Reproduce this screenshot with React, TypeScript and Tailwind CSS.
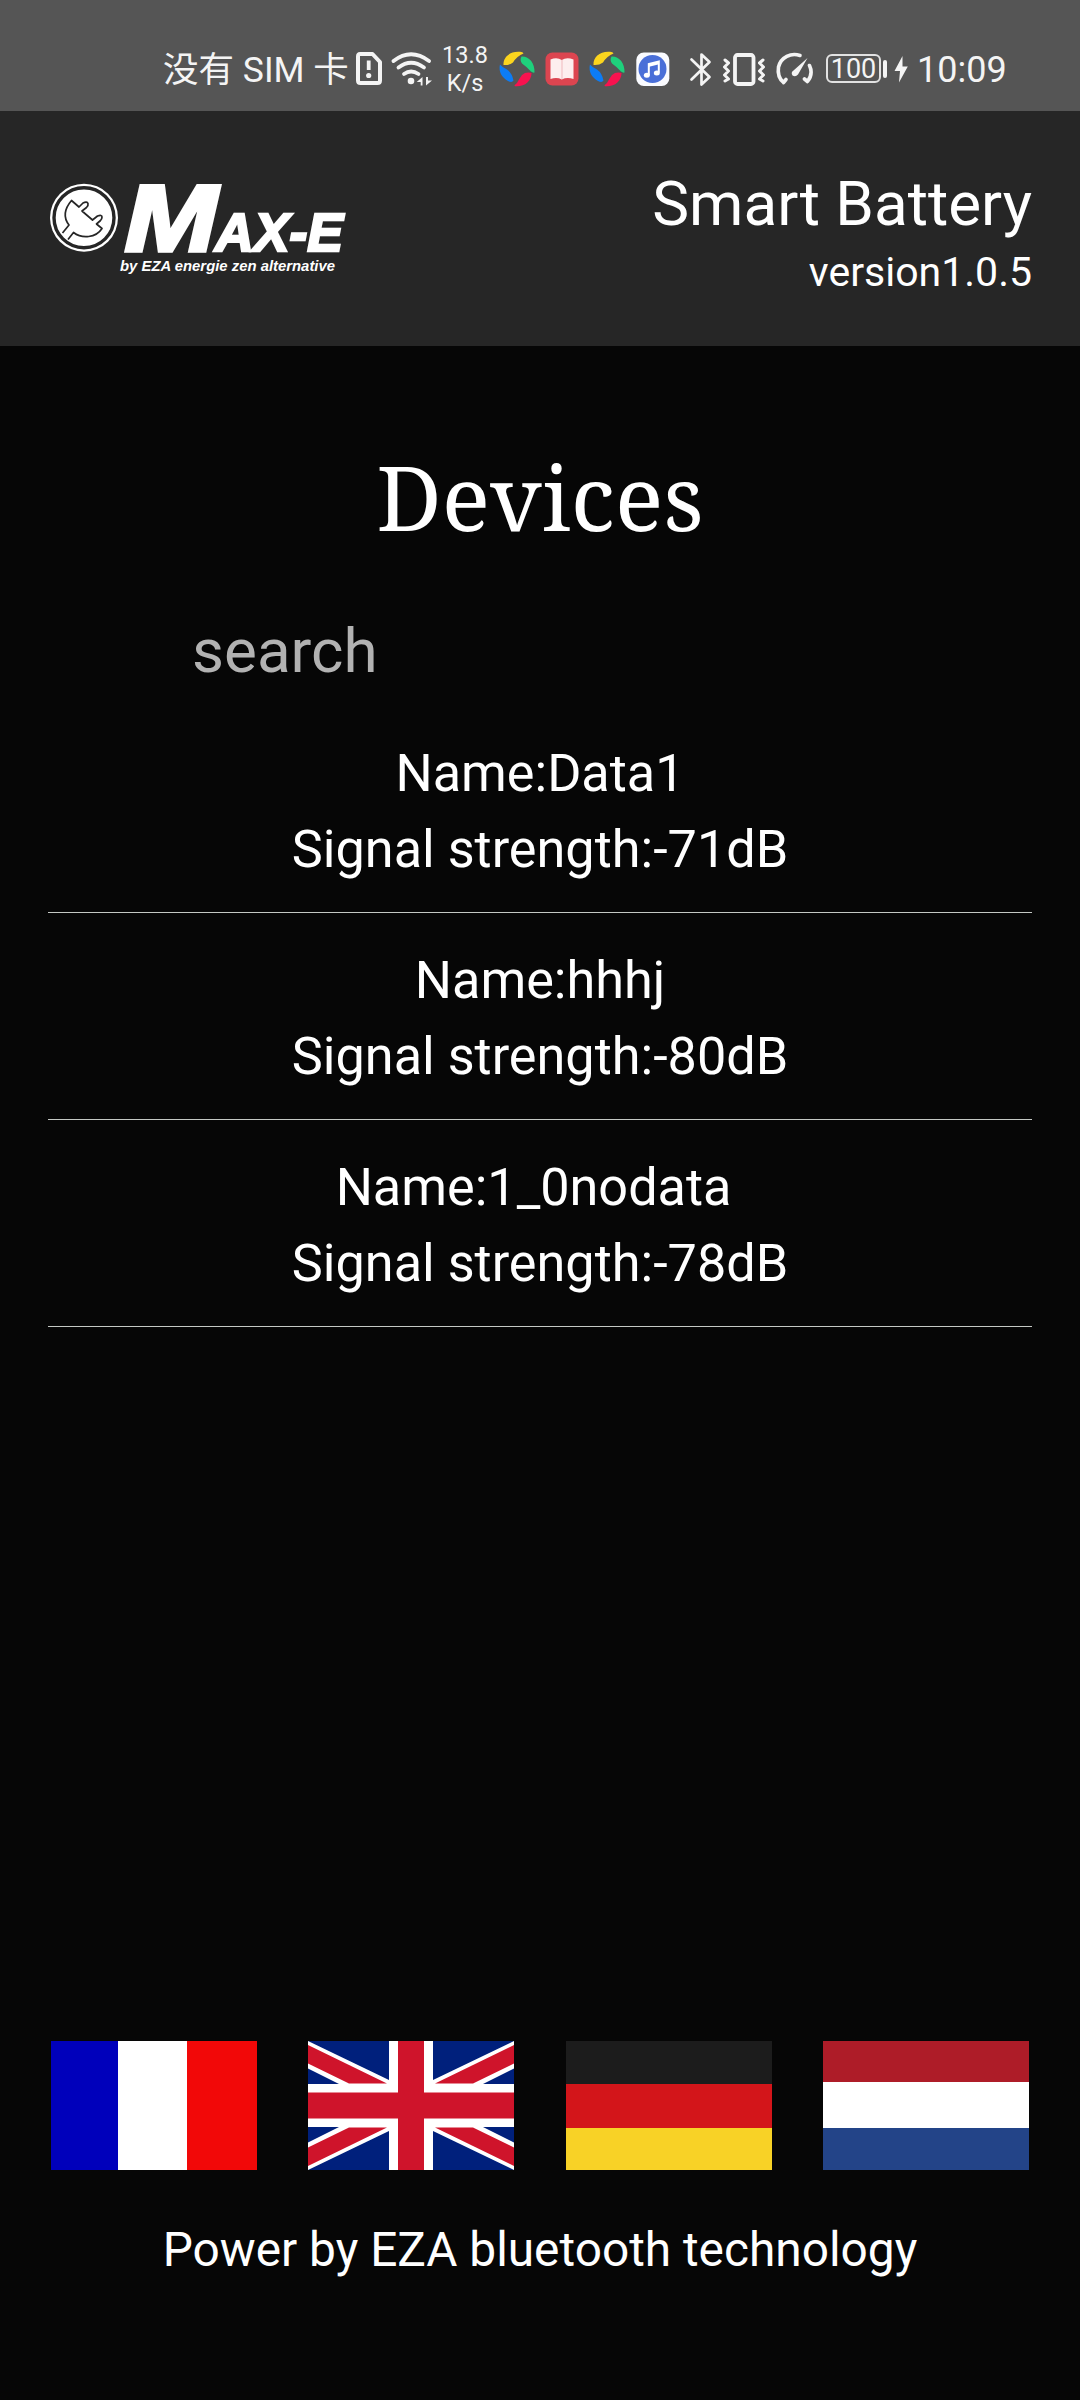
import React from "react";

const devices = [
  { name: "Data1", signal: "-71dB" },
  { name: "hhhj", signal: "-80dB" },
  { name: "1_0nodata\u00a0", signal: "-78dB" },
];

function SimIcon() {
  return (
    <svg className="ml-[7px] h-[40px] w-[26px]" viewBox="356 48 26 40" fill="none" stroke="#f4f4f4">
      <path d="M360 53h12.500l7.500 8v18.500q0 2.500-2.500 2.500h-17q-2.500 0-2.500-2.500v-24q0-2.500 2-2.500z" strokeWidth="4" strokeLinejoin="round" />
      <path d="M368.700 59.500v9.500" strokeWidth="3.800" />
      <circle cx="368.700" cy="74.500" r="2.600" fill="#f4f4f4" stroke="none" />
    </svg>
  );
}

function WifiIcon() {
  return (
    <svg className="ml-[9px] h-[40px] w-[42px]" viewBox="391 48 42 40" fill="none" stroke="#f4f4f4" strokeWidth="3.800" strokeLinecap="round">
      <path d="M393.500 60Q411 46.500 429 60" />
      <path d="M398.500 66.500Q411 57 424 66.500" />
      <path d="M404 73Q411 68 418.500 73" />
      <circle cx="411" cy="80" r="3.300" fill="#f4f4f4" stroke="none" />
      <path d="M422.500 76v8.500h-1.800v-3.500h-4zM426 76v8.500l6-5h-4v-3.500z" fill="#f4f4f4" stroke="none" />
    </svg>
  );
}

function PinwheelIcon({ className }: { className: string }) {
  return (
    <svg className={className} viewBox="0 0 36 36">
      <path d="M4.500 14C4 6 11 0 21 .8Q24 1 24.500 2.500Q18 5 14 11.500Q10 14.500 4.500 14Z" fill="#fcd51e" />
      <path d="M22.500 5.500C30 5 36 12 35.500 21.500Q34 22 32 20.500Q28 16 23 12.500Q20.500 9 22.500 5.500Z" fill="#1fd07c" />
      <path d="M32.500 22C32.500 30 26 36 16 35.300Q14.500 34.500 18 32Q20 28 23 24Q27 20.500 32.500 22Z" fill="#f8124f" />
      <path d="M1 13.500Q3 16 8 18.500Q13 22 14.500 29.500Q13 32 9 30C2 26-.5 20 1 13.500Z" fill="#0c7cf5" />
    </svg>
  );
}

function BookIcon() {
  return (
    <svg className="ml-[10px] h-[36px] w-[34px]" viewBox="0 0 34 36">
      <rect x="0.500" y="1.500" width="33" height="33" rx="7" fill="#dc4550" />
      <path d="M5.500 8.500Q12 6 16.800 9Q21.500 6 28.500 8.500V28Q22 26 16.800 28.500Q12 26 5.500 28Z" fill="#fdeeee" />
      <path d="M17 9v19" stroke="#f0b9bd" strokeWidth="1" />
    </svg>
  );
}

function MusicIcon() {
  return (
    <svg className="ml-[11px] h-[36px] w-[34px]" viewBox="0 0 34 36">
      <rect x="0.300" y="1.500" width="33" height="33.500" rx="7.500" fill="#fafbff" />
      <circle cx="16.500" cy="18" r="14" fill="#4a6fd8" />
      <path d="M12.800 24V13l10-2.500v11" fill="none" stroke="#fff" strokeWidth="2" />
      <path d="M12.800 14.500l10-2.500" stroke="#fff" strokeWidth="2.500" />
      <ellipse cx="10.800" cy="24.300" rx="3" ry="2.500" fill="#fff" />
      <ellipse cx="20.800" cy="22" rx="3" ry="2.500" fill="#fff" />
    </svg>
  );
}

function BluetoothIcon() {
  return (
    <svg className="ml-[19px] h-[40px] w-[24px]" viewBox="689 48 24 40" fill="none" stroke="#f4f4f4" strokeWidth="2.700" strokeLinejoin="round" strokeLinecap="round">
      <path d="M691.500 58.500l18 17.500l-8 7.500v-30l8 7.500l-18 17.500" />
    </svg>
  );
}

function VibrateIcon() {
  return (
    <svg className="ml-[8px] h-[40px] w-[46px]" viewBox="721 48 46 40" fill="none" stroke="#f4f4f4" strokeLinejoin="round" strokeLinecap="round">
      <rect x="735" y="54" width="18.500" height="29" rx="2.500" strokeWidth="3.800" />
      <path d="M725 59l3.500 3l-4 4l4 4l-4 4l4 4l-3.500 2M763 59l-3.500 3l4 4l-4 4l4 4l-4 4l3.500 2" strokeWidth="3" />
    </svg>
  );
}

function GaugeIcon() {
  return (
    <svg className="ml-[8px] h-[40px] w-[40px]" viewBox="774 48 40 40" fill="none" stroke="#f4f4f4" strokeWidth="3.600" strokeLinecap="round" strokeLinejoin="round">
      <path d="M785 78.500l-2.500 3Q776 76 777.500 66C780 56 790 51.500 799 54.500" />
      <path d="M808.500 64.500Q812.500 73 806.500 80.500l-3-2.500" />
      <path d="M806.500 57L797 73.500Q794.500 76.500 791.500 74.500Q789.500 71.500 792.500 69.500Z" fill="#f4f4f4" stroke="none" />
    </svg>
  );
}

function BatteryIcon() {
  return (
    <div className="ml-[11px] flex items-center">
      <div className="flex h-[29px] w-[55px] items-center justify-center rounded-[6px] border-2 border-[#e2e2e2] pt-[2px] text-[27px] leading-none text-[#f4f4f4]">100</div>
      <div className="ml-[2px] h-[18px] w-[4px] rounded-[2px] bg-[#f4f4f4]" />
      <svg className="ml-[7px] h-[28px] w-[14px]" viewBox="893 54 14 28">
        <path d="M901.500 55L893.500 70h5.500l-1 11.500L906.800 65.500H901.500Z" fill="#f4f4f4" />
      </svg>
    </div>
  );
}

function StatusBar() {
  return (
    <div className="flex h-[111px] items-center bg-[#555555] pt-[26px] pl-[163px] font-['Roboto','Noto_Sans_CJK_SC',sans-serif] text-[#f4f4f4]">
      <div className="w-[186px] whitespace-nowrap pt-[2px] text-[35.500px] leading-[40px]">没有 SIM 卡</div>
      <SimIcon />
      <WifiIcon />
      <div className="ml-[9px] w-[46px] text-center text-[23.500px] leading-[28px]">
        <div>13.8</div>
        <div>K/s</div>
      </div>
      <PinwheelIcon className="ml-[11px] h-[36px] w-[36px]" />
      <BookIcon />
      <PinwheelIcon className="ml-[10px] h-[36px] w-[36px]" />
      <MusicIcon />
      <BluetoothIcon />
      <VibrateIcon />
      <GaugeIcon />
      <BatteryIcon />
      <div className="ml-[9px] pt-[2px] text-[36px] leading-[40px]">10:09</div>
    </div>
  );
}

function Logo() {
  return (
    <svg className="h-[140px] w-[310px]" viewBox="45 150 310 140" fill="#fff">
      <circle cx="84" cy="217.700" r="34" />
      <circle cx="84" cy="217.700" r="30" fill="none" stroke="#262626" strokeWidth="3.400" />
      <path
        d="M62.500 233l6.500-8C62 216 66 207 71.500 200.500l7.500 6.500l4-4q4-2 5 .500q.5 2-1.500 4l-4.500 3.500l10.500 9l5-4q4.500-1.500 4.500 1q0 2-1.500 3.500l-4 3.500l5.500 4.500C96 238 82 239 73.500 232.500l-5.500 7"
        fill="none"
        stroke="#262626"
        strokeWidth="1.700"
        strokeLinejoin="round"
      />
      <g fontFamily="Liberation Sans, sans-serif" fontWeight="700" fontStyle="italic" stroke="#fff" strokeLinejoin="miter">
        <text x="124.500" y="250.500" fontSize="94" textLength="93" lengthAdjust="spacingAndGlyphs" strokeWidth="3.500">M</text>
        <text x="215" y="251" fontSize="54.500" textLength="128" lengthAdjust="spacingAndGlyphs" strokeWidth="2.500">AX-E</text>
        <text x="120" y="270.500" fontSize="15" textLength="215" lengthAdjust="spacingAndGlyphs" stroke="none">by EZA energie zen alternative</text>
      </g>
    </svg>
  );
}

function Header() {
  return (
    <header className="flex h-[235px] items-start justify-between bg-[#262626] pr-[48px] pl-[45px] text-white">
      <div className="pt-[39px]">
        <Logo />
      </div>
      <div className="pt-[57px] text-right">
        <div className="text-[62px] leading-[72px]">Smart Battery</div>
        <div className="text-[41px] leading-[64px]">version1.0.5</div>
      </div>
    </header>
  );
}

function FranceFlag() {
  return (
    <div className="flex h-[129px] w-[206px]">
      <div className="w-[67px] bg-[#0000bb]" />
      <div className="w-[69px] bg-white" />
      <div className="flex-1 bg-[#f20808]" />
    </div>
  );
}

function BritishFlag() {
  return (
    <svg className="h-[129px] w-[206px]" viewBox="0 0 206 129">
      <rect width="206" height="129" fill="#00207c" />
      <path d="M0 0L81 39V43H31L0 27.500ZM206 0L125 39V43H175L206 27.500ZM0 129L81 90V86H31L0 101.500ZM206 129L125 90V86H175L206 101.500Z" fill="#fff" />
      <path d="M0 4L79 42.500H41L0 22.500ZM206 4L127 42.500H165L206 22.500ZM0 125L79 86.500H41L0 106.500ZM206 125L127 86.500H165L206 106.500Z" fill="#cf142b" />
      <path d="M81 0h44v43h81v43h-81v43h-44v-43H0v-43h81z" fill="#fff" />
      <path d="M90 0h26v51.500h90v26h-90V129H90V77.500H0v-26h90z" fill="#cf142b" />
    </svg>
  );
}

function GermanFlag() {
  return (
    <div className="flex h-[129px] w-[206px] flex-col">
      <div className="h-[43px] bg-[#1c1c1c]" />
      <div className="h-[44px] bg-[#d3151a]" />
      <div className="flex-1 bg-[#f8d226]" />
    </div>
  );
}

function DutchFlag() {
  return (
    <div className="flex h-[129px] w-[206px] flex-col">
      <div className="h-[41px] bg-[#ae1c28]" />
      <div className="h-[46px] bg-white" />
      <div className="flex-1 bg-[#234488]" />
    </div>
  );
}

export default function App() {
  return (
    <div className="flex h-[2400px] w-[1080px] flex-col overflow-hidden bg-[#060606] font-['Roboto',sans-serif] text-white">
      <StatusBar />
      <Header />
      <main className="flex flex-1 flex-col">
        <h1 className="mt-[95px] h-[110px] text-center font-['Noto_Serif',serif] text-[90px] leading-[110px]">Devices</h1>
        <input
          placeholder="search"
          className="mx-[48px] mt-[45px] h-[108px] bg-transparent pl-[144px] text-[62px] outline-none placeholder:text-[#b2b2b2]"
        />
        <ul className="mx-[48px] mt-[2px]">
          {devices.map((d) => (
            <li key={d.name} className="h-[207px] border-b border-[#c4c8c4] pt-[30px] text-center text-[52.200px] leading-[76px]">
              <div>Name:{d.name}</div>
              <div>Signal strength:{d.signal}</div>
            </li>
          ))}
        </ul>
        <div className="mt-auto flex justify-between pr-[51px] pl-[51px]">
          <FranceFlag />
          <BritishFlag />
          <GermanFlag />
          <DutchFlag />
        </div>
        <footer className="mt-[40px] h-[190px] text-center text-[47.800px] leading-[80px]">Power by EZA bluetooth technology</footer>
      </main>
    </div>
  );
}
